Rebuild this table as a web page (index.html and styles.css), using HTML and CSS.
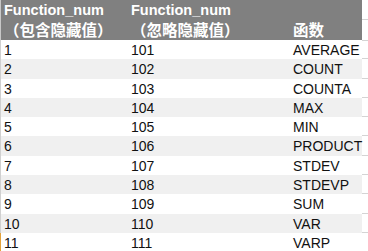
FILE: index.html
```html
<!DOCTYPE html>
<html lang="zh-CN">

<head>
    <meta charset="UTF-8">
    <meta name="viewport" content="width=device-width, initial-scale=1.0">
    <title>SUBTOTAL Function_num</title>
    <link rel="stylesheet" href="styles.css">
</head>

<body>
    <div class="sheet">
        <div class="row head">
            <div class="cell c1">
                <div class="line">Function_num</div>
                <div class="line cn">（包含隐藏值）</div>
            </div>
            <div class="cell c2">
                <div class="line">Function_num</div>
                <div class="line cn">（忽略隐藏值）</div>
            </div>
            <div class="cell c3">
                <div class="line"></div>
                <div class="line cn">函数</div>
            </div>
            <div class="edge">
                <div class="gridline"></div>
                <div class="gridline"></div>
            </div>
        </div>

        <div class="row"><div class="cell c1">1</div><div class="cell c2">101</div><div class="cell c3">AVERAGE</div><div class="edge gridline"></div></div>
        <div class="row alt"><div class="cell c1">2</div><div class="cell c2">102</div><div class="cell c3">COUNT</div><div class="edge gridline"></div></div>
        <div class="row"><div class="cell c1">3</div><div class="cell c2">103</div><div class="cell c3">COUNTA</div><div class="edge gridline"></div></div>
        <div class="row alt"><div class="cell c1">4</div><div class="cell c2">104</div><div class="cell c3">MAX</div><div class="edge gridline"></div></div>
        <div class="row"><div class="cell c1">5</div><div class="cell c2">105</div><div class="cell c3">MIN</div><div class="edge gridline"></div></div>
        <div class="row alt"><div class="cell c1">6</div><div class="cell c2">106</div><div class="cell c3">PRODUCT</div><div class="edge gridline"></div></div>
        <div class="row"><div class="cell c1">7</div><div class="cell c2">107</div><div class="cell c3">STDEV</div><div class="edge gridline"></div></div>
        <div class="row alt"><div class="cell c1">8</div><div class="cell c2">108</div><div class="cell c3">STDEVP</div><div class="edge gridline"></div></div>
        <div class="row"><div class="cell c1">9</div><div class="cell c2">109</div><div class="cell c3">SUM</div><div class="edge gridline"></div></div>
        <div class="row alt"><div class="cell c1">10</div><div class="cell c2">110</div><div class="cell c3">VAR</div><div class="edge gridline"></div></div>
        <div class="row active"><div class="cell c1">11</div><div class="cell c2">111</div><div class="cell c3">VARP</div><div class="edge gridline"></div></div>
    </div>
</body>

</html>
```

FILE: styles.css
```css
body {
    margin: 0;
    padding: 0;
    background-color: #fff;
    font-family: "Liberation Sans", Arial, "Noto Sans CJK SC", sans-serif;
    font-size: 14px;
    color: #111;
}

.sheet {
    width: 368px;
    height: 251px;
    overflow: hidden;
}

.row {
    display: flex;
    height: 19.3px;
    line-height: 19.3px;
    border-left: 1px solid #d0d0d0;
}

.row.alt .cell {
    background-color: #f0f0f0;
}

.row.active {
    border-left-color: #e3a23b;
}

.cell {
    box-sizing: border-box;
    padding-top: 1px;
    white-space: nowrap;
    overflow: visible;
}

.c1 {
    width: 127px;
    padding-left: 3px;
}

.c2 {
    width: 161px;
    padding-left: 3px;
}

.c3 {
    width: 73px;
    padding-left: 4px;
}

.edge {
    flex: 1;
    box-sizing: border-box;
}

.gridline {
    border-bottom: 1px solid #d4d4d4;
}

/* cabecera gris */
.row.head {
    height: 40px;
    line-height: 20px;
    border-left-color: #c8c8c8;
}

.head .cell {
    background-color: #808080;
    color: #fff;
    font-weight: bold;
    font-size: 14.5px;
    padding-top: 0;
}

.head .line {
    height: 20px;
}

.head .line.cn {
    font-family: "Noto Sans CJK SC", sans-serif;
    font-size: 15.5px;
    margin-top: -1px;
}

.head .edge .gridline {
    height: 19px;
}

.head .edge .gridline + .gridline {
    height: 20px;
}
```
